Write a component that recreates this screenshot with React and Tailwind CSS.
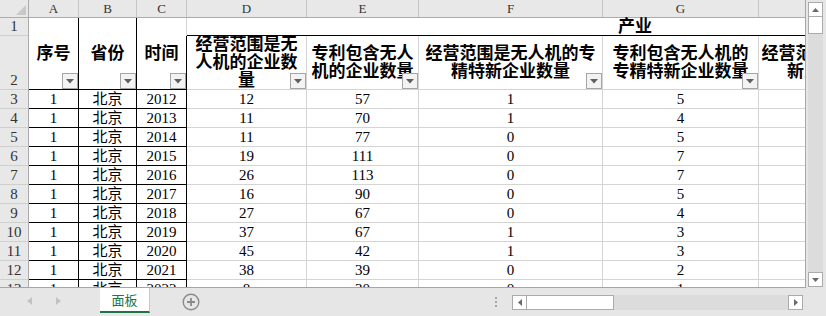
import React from 'react'

const cols = [
  { key: 'A', w: 'w-[50px]' },
  { key: 'B', w: 'w-[58px]' },
  { key: 'C', w: 'w-[50px]' },
  { key: 'D', w: 'w-[120px]' },
  { key: 'E', w: 'w-[112px]' },
  { key: 'F', w: 'w-[184px]' },
  { key: 'G', w: 'w-[156px]' },
  { key: 'H', w: 'w-[159px]' },
]

const rows = [
  [3, '2012', 12, 57, 1, 5],
  [4, '2013', 11, 70, 1, 4],
  [5, '2014', 11, 77, 0, 5],
  [6, '2015', 19, 111, 0, 7],
  [7, '2016', 26, 113, 0, 7],
  [8, '2017', 16, 90, 0, 5],
  [9, '2018', 27, 67, 0, 4],
  [10, '2019', 37, 67, 1, 3],
  [11, '2020', 45, 42, 1, 3],
  [12, '2021', 38, 39, 0, 2],
  [13, '2022', 8, 30, 0, 1],
]

function FilterButton() {
  return (
    <div className="absolute right-0 bottom-0 w-[16px] h-[16px] border border-[#a6a6a6] bg-[#f3f3f3] flex items-center justify-center">
      <svg width="8" height="5" viewBox="0 0 8 5">
        <polygon points="0,0 8,0 4,4.5" fill="#5f5f5f" />
      </svg>
    </div>
  )
}

function HeaderText({ lines }) {
  return (
    <div className="font-bold text-[17px] leading-[18px] text-black text-center whitespace-nowrap">
      {lines.map((l, i) => (
        <div key={i}>{l}</div>
      ))}
    </div>
  )
}

export default function App() {
  return (
    <div className="w-[826px] h-[316px] overflow-hidden bg-[#e6e6e6] flex flex-col font-['Liberation_Serif','Noto_Sans_CJK_SC',serif]">
      <div className="flex h-[288px] shrink-0">
        {/* sheet grid */}
        <div className="w-[806px] h-[288px] overflow-hidden bg-white border-r border-b border-[#a6a6a6]">
          {/* column letters */}
          <div className="flex h-[18px] w-max bg-[#e8e8e8] border-b border-[#ababab]">
            <div className="w-[29px] shrink-0 border-r border-[#ababab] flex items-end justify-end pr-[2px] pb-[2px]">
              <svg width="10" height="10" viewBox="0 0 10 10">
                <polygon points="10,0 10,10 0,10" fill="#c8c8c8" />
              </svg>
            </div>
            {cols.map(c => (
              <div key={c.key} className={`${c.w} shrink-0 border-r border-[#c6c6c6] flex items-center justify-center text-[13px] text-[#333]`}>
                {c.key}
              </div>
            ))}
          </div>

          {/* rows 1-2 */}
          <div className="flex h-[72px] w-max">
            <div className="w-[29px] shrink-0 flex flex-col bg-[#e8e8e8] border-r border-[#ababab] text-[15px] text-[#333]">
              <div className="h-[18px] border-b border-[#cfcfcf] flex items-center justify-center">1</div>
              <div className="h-[54px] border-b border-[#cfcfcf] flex items-end justify-center leading-[17px]">2</div>
            </div>
            <div className="w-[50px] shrink-0 relative border-r border-b border-black flex items-center justify-center">
              <HeaderText lines={['序号']} />
              <FilterButton />
            </div>
            <div className="w-[58px] shrink-0 relative border-r border-b border-black flex items-center justify-center">
              <HeaderText lines={['省份']} />
              <FilterButton />
            </div>
            <div className="w-[50px] shrink-0 flex flex-col">
              <div className="h-[18px] border-r border-[#d4d4d4]" />
              <div className="h-[54px] relative border-r border-b border-black flex items-center justify-center pb-[18px]">
                <HeaderText lines={['时间']} />
                <FilterButton />
              </div>
            </div>
            <div className="flex flex-col">
              <div className="h-[18px] w-[731px] border-b border-black flex items-center pl-[431px]">
                <span className="font-bold text-[17px] leading-[18px]">产业</span>
              </div>
              <div className="h-[54px] flex">
                <div className="w-[120px] shrink-0 relative border-r border-b border-[#d4d4d4] flex items-center justify-center">
                  <HeaderText lines={['经营范围是无', '人机的企业数', '量']} />
                  <FilterButton />
                </div>
                <div className="w-[112px] shrink-0 relative border-r border-b border-[#d4d4d4] flex items-center justify-center">
                  <HeaderText lines={['专利包含无人', '机的企业数量']} />
                  <FilterButton />
                </div>
                <div className="w-[184px] shrink-0 relative border-r border-b border-[#d4d4d4] flex items-center justify-center">
                  <HeaderText lines={['经营范围是无人机的专', '精特新企业数量']} />
                  <FilterButton />
                </div>
                <div className="w-[156px] shrink-0 relative border-r border-b border-[#d4d4d4] flex items-center justify-center">
                  <HeaderText lines={['专利包含无人机的', '专精特新企业数量']} />
                  <FilterButton />
                </div>
                <div className="w-[159px] shrink-0 border-r border-b border-[#d4d4d4] flex items-center justify-center">
                  <HeaderText lines={['经营范围是无人机的', '新三板企业数']} />
                </div>
              </div>
            </div>
          </div>

          {/* data rows */}
          {rows.map(r => (
            <div key={r[0]} className="flex h-[19px] w-max text-[15px] leading-[18px] text-black">
              <div className="w-[29px] shrink-0 bg-[#e8e8e8] border-r border-b border-r-[#ababab] border-b-[#cfcfcf] flex items-center justify-center text-[#333]">
                {r[0]}
              </div>
              <div className="w-[50px] shrink-0 border-r border-b border-black flex items-center justify-center">1</div>
              <div className="w-[58px] shrink-0 border-r border-b border-black flex items-center justify-center">北京</div>
              <div className="w-[50px] shrink-0 border-r border-b border-black flex items-center justify-center">{r[1]}</div>
              <div className="w-[120px] shrink-0 border-r border-b border-[#d4d4d4] flex items-center justify-center">{r[2]}</div>
              <div className="w-[112px] shrink-0 border-r border-b border-[#d4d4d4] flex items-center justify-center">{r[3]}</div>
              <div className="w-[184px] shrink-0 border-r border-b border-[#d4d4d4] flex items-center justify-center">{r[4]}</div>
              <div className="w-[156px] shrink-0 border-r border-b border-[#d4d4d4] flex items-center justify-center">{r[5]}</div>
              <div className="w-[159px] shrink-0 border-r border-b border-[#d4d4d4]" />
            </div>
          ))}
        </div>

        {/* vertical scrollbar */}
        <div className="w-[20px] h-[288px] pl-[2px] pt-[2px] pb-[1px] flex flex-col">
          <div className="w-[15px] h-[15px] shrink-0 bg-white border border-[#ababab] flex items-center justify-center">
            <svg width="7" height="4" viewBox="0 0 7 4"><polygon points="0,4 7,4 3.5,0" fill="#6a6a6a" /></svg>
          </div>
          <div className="w-[15px] h-[17px] shrink-0 bg-white border border-[#ababab] border-t-0" />
          <div className="w-[15px] flex-1 bg-[#dcdcdc]" />
          <div className="w-[15px] h-[15px] shrink-0 bg-white border border-[#ababab] flex items-center justify-center">
            <svg width="7" height="4" viewBox="0 0 7 4"><polygon points="0,0 7,0 3.5,4" fill="#6a6a6a" /></svg>
          </div>
        </div>
      </div>

      {/* bottom sheet bar */}
      <div className="h-[28px] flex items-start">
        <div className="w-[100px] h-[25px] shrink-0 flex items-center">
          <svg className="ml-[27px]" width="5" height="8" viewBox="0 0 5 8"><polygon points="5,0 5,8 0,4" fill="#c2c2c2" /></svg>
          <svg className="ml-[24px]" width="5" height="8" viewBox="0 0 5 8"><polygon points="0,0 0,8 5,4" fill="#c2c2c2" /></svg>
        </div>
        <div className="w-[50px] h-[25px] shrink-0 bg-white border-r border-[#c8c8c8] border-b-2 border-b-[#217346] flex items-center justify-center font-['Noto_Sans_CJK_SC',sans-serif] text-[13px] text-[#217346]">
          面板
        </div>
        <div className="w-[32px] shrink-0" />
        <div className="w-[18px] h-[28px] shrink-0 flex items-center">
          <svg width="18" height="18" viewBox="0 0 18 18">
            <circle cx="9" cy="9" r="7.8" fill="none" stroke="#8a8a8a" strokeWidth="1.4" />
            <path d="M9 5v8M5 9h8" stroke="#8a8a8a" strokeWidth="1.8" />
          </svg>
        </div>
        <div className="w-[294px] shrink-0" />
        <div className="w-[4px] h-[28px] shrink-0 flex flex-col items-center justify-center gap-[2px]">
          <div className="w-[2px] h-[2px] bg-[#a8a8a8]" />
          <div className="w-[2px] h-[2px] bg-[#a8a8a8]" />
          <div className="w-[2px] h-[2px] bg-[#a8a8a8]" />
        </div>
        <div className="w-[14px] shrink-0" />
        <div className="w-[291px] h-[15px] mt-[7px] shrink-0 flex">
          <div className="w-[15px] h-[15px] shrink-0 bg-white border border-[#ababab] flex items-center justify-center">
            <svg width="4" height="7" viewBox="0 0 4 7"><polygon points="4,0 4,7 0,3.5" fill="#6a6a6a" /></svg>
          </div>
          <div className="w-[87px] h-[15px] shrink-0 bg-white border border-[#ababab] border-l-0" />
          <div className="flex-1 h-[15px] bg-[#dcdcdc]" />
          <div className="w-[15px] h-[15px] shrink-0 bg-white border border-[#ababab] flex items-center justify-center">
            <svg width="4" height="7" viewBox="0 0 4 7"><polygon points="0,0 0,7 4,3.5" fill="#6a6a6a" /></svg>
          </div>
        </div>
      </div>
    </div>
  )
}
